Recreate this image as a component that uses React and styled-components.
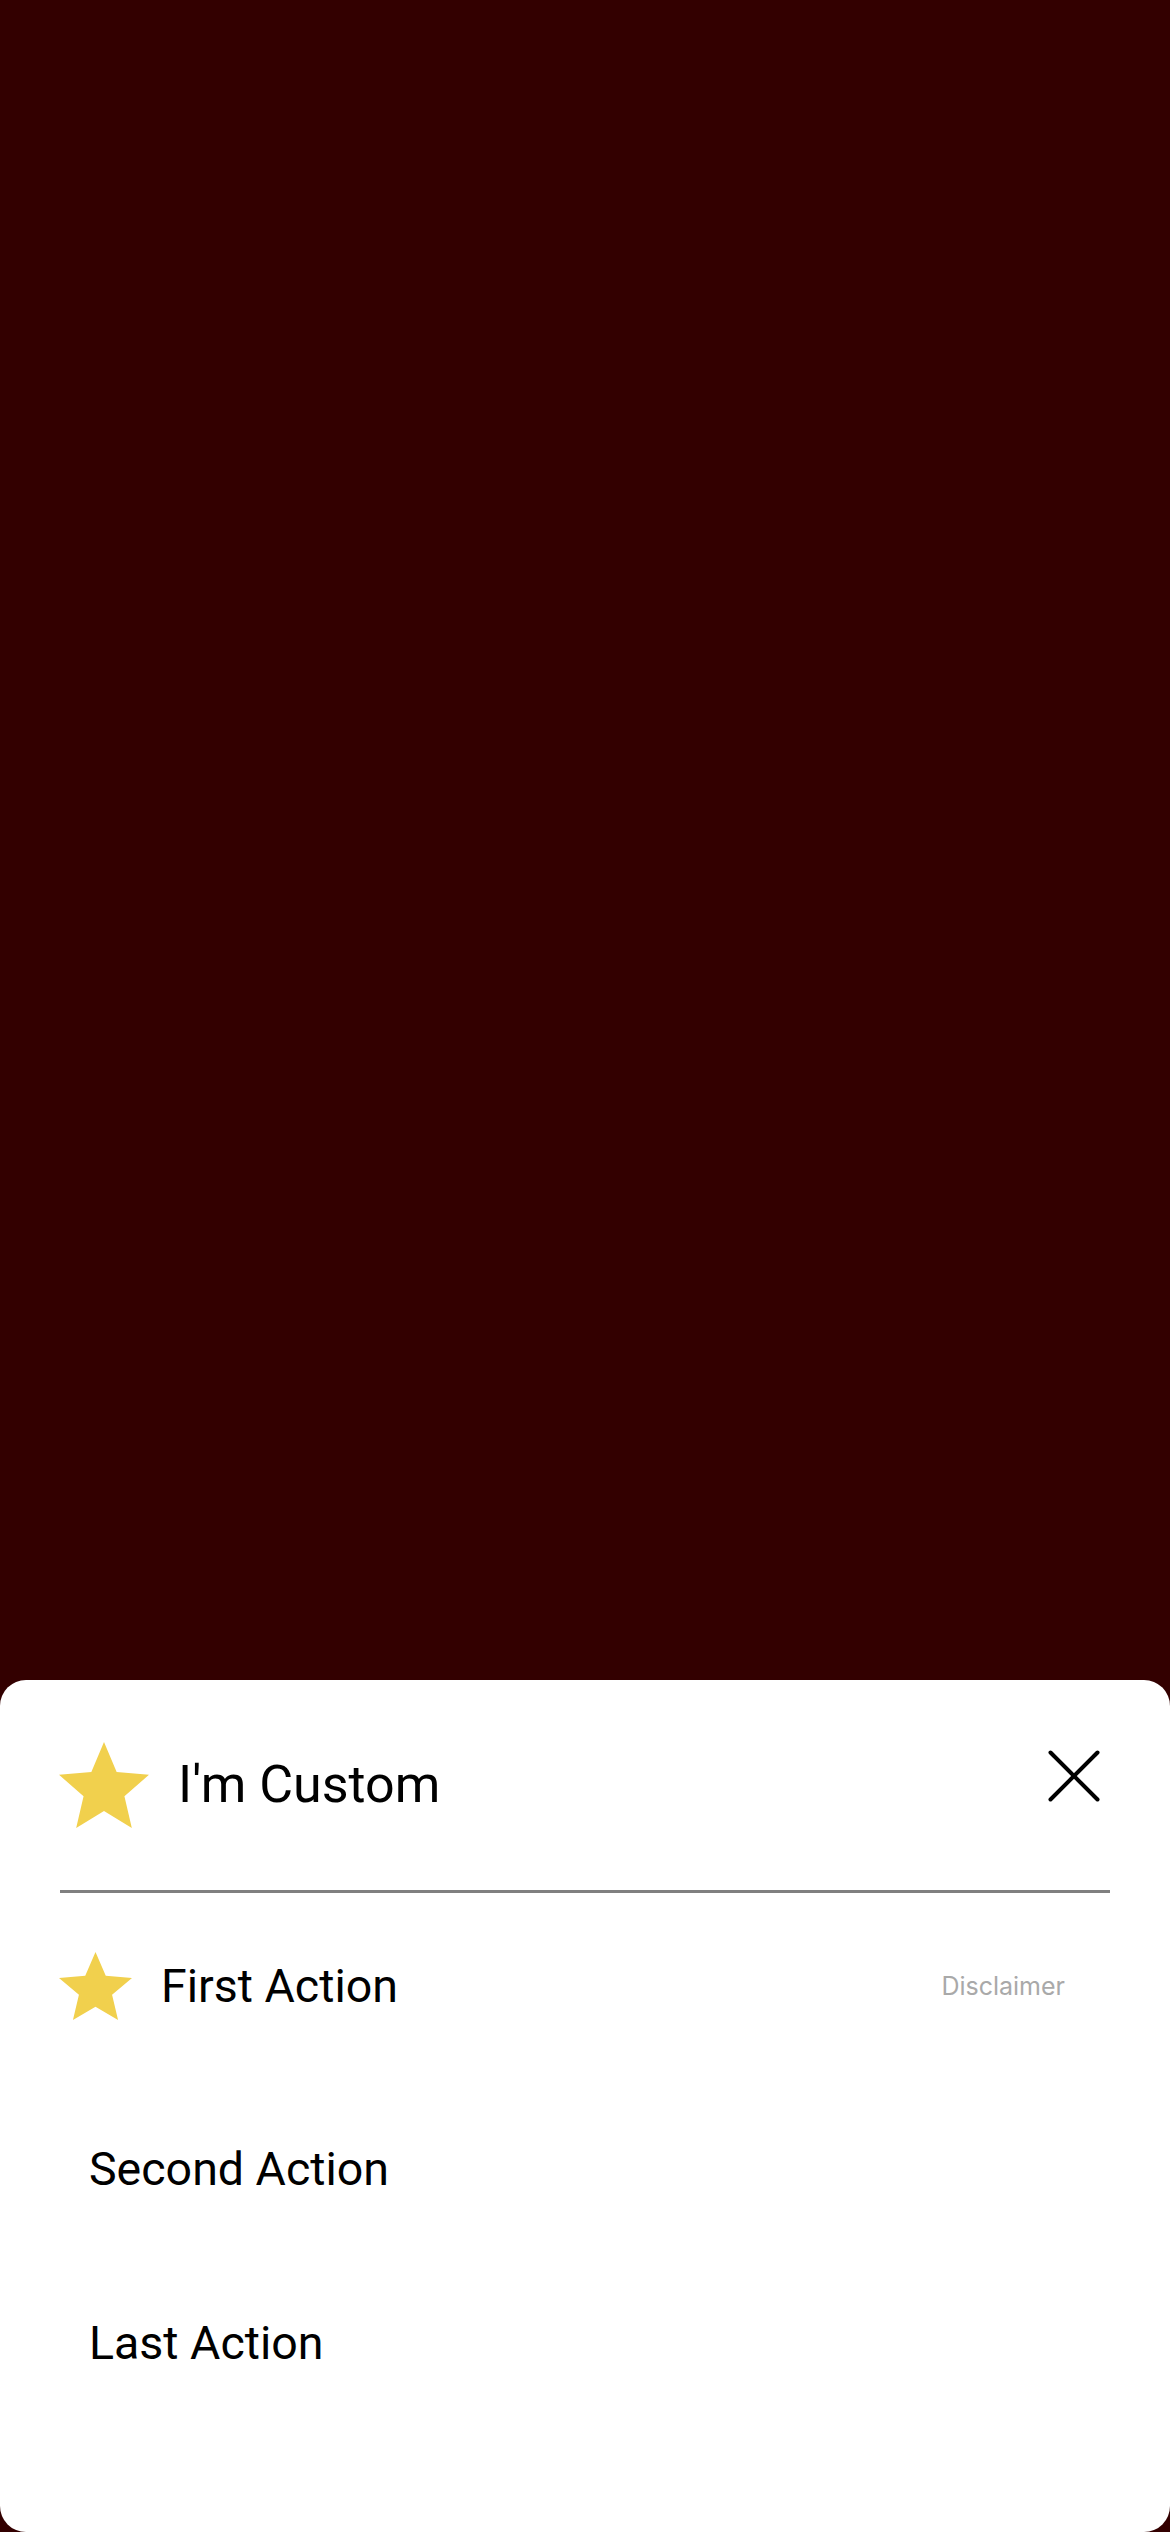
import styled, { createGlobalStyle } from "styled-components";

const GlobalStyle = createGlobalStyle`
  html, body {
    margin: 0;
    padding: 0;
    background: #330000;
  }
  body {
    font-family: Roboto, "Noto Sans", sans-serif;
  }
`;

const Screen = styled.div`
  min-height: 2532px;
  display: flex;
  flex-direction: column;
  justify-content: flex-end;
  background: #330000;
`;

const Sheet = styled.div`
  background: #ffffff;
  border-radius: 26px;
  padding-bottom: 105px;
  display: flex;
  flex-direction: column;
`;

const Header = styled.div`
  height: 210px;
  display: flex;
  align-items: center;
  padding: 0 70px 0 59px;
  gap: 29px;
`;

const Title = styled.span`
  font-size: 52px;
  line-height: 1;
  color: #000;
  white-space: nowrap;
`;

const CloseButton = styled.button`
  margin-left: auto;
  margin-bottom: 18px;
  padding: 0;
  border: 0;
  background: none;
  width: 52px;
  height: 52px;
  display: flex;
`;

const Divider = styled.div`
  height: 3px;
  background: #808080;
  margin: 0 60px;
`;

const Row = styled.div`
  height: ${(p) => p.$h}px;
  display: flex;
  align-items: center;
  padding: 0 105px 0 ${(p) => (p.$icon ? 59 : 89)}px;
  gap: 29px;
`;

const ActionLabel = styled.span`
  font-size: 46.5px;
  line-height: 1;
  color: #000;
  white-space: nowrap;
`;

const Disclaimer = styled.span`
  margin-left: auto;
  font-family: Inter, Roboto, sans-serif;
  font-size: 25px;
  line-height: 1;
  color: #a9a9a9;
`;

const Star = ({ w, h }) => (
  <svg width={w} height={h} viewBox="2 2 20 19" preserveAspectRatio="none" style={{ flex: "none" }}>
    <path
      fill="#F1D04D"
      d="M12 17.27L18.18 21l-1.64-7.03L22 9.24l-7.19-.61L12 2 9.19 8.63 2 9.24l5.46 4.73L5.82 21z"
    />
  </svg>
);

const CloseIcon = () => (
  <svg width="52" height="52" viewBox="0 0 52 52">
    <g stroke="#000" strokeWidth="4" strokeLinecap="round">
      <line x1="2.5" y1="2.5" x2="49.5" y2="49.5" />
      <line x1="49.5" y1="2.5" x2="2.5" y2="49.5" />
    </g>
  </svg>
);

const actions = [
  { label: "First Action", icon: true, disclaimer: "Disclaimer", h: 186 },
  { label: "Second Action", h: 180 },
  { label: "Last Action", h: 168 },
];

export default function App() {
  return (
    <>
      <GlobalStyle />
      <Screen>
        <Sheet>
          <Header>
            <Star w={90} h={86} />
            <Title>I'm Custom</Title>
            <CloseButton aria-label="Close">
              <CloseIcon />
            </CloseButton>
          </Header>
          <Divider />
          {actions.map((a) => (
            <Row key={a.label} $h={a.h} $icon={a.icon}>
              {a.icon && <Star w={73} h={68} />}
              <ActionLabel>{a.label}</ActionLabel>
              {a.disclaimer && <Disclaimer>{a.disclaimer}</Disclaimer>}
            </Row>
          ))}
        </Sheet>
      </Screen>
    </>
  );
}
